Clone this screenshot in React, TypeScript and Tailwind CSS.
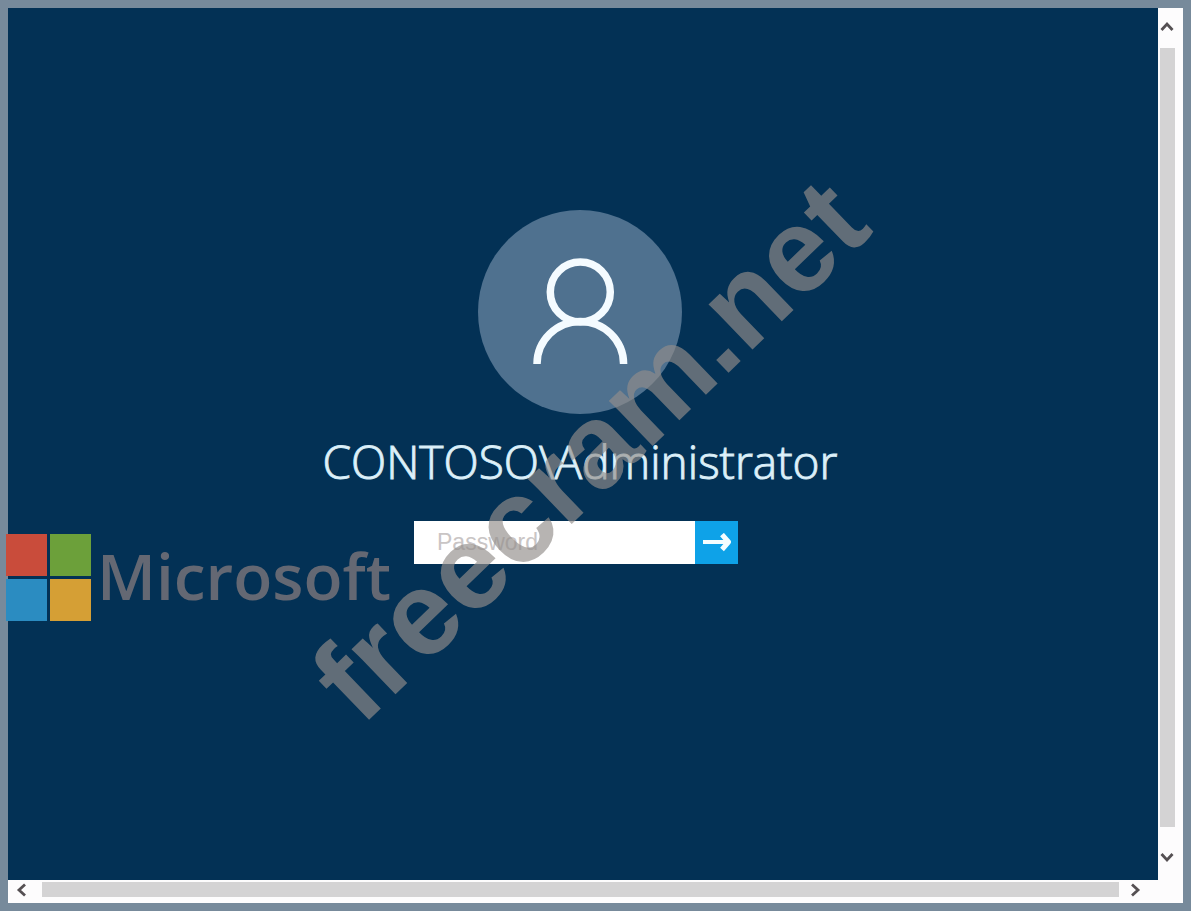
import * as React from "react";
import { useState } from "react";

const chevrons = {
    up: "M1.5 10 L7 4 L12.5 10",
    down: "M1.5 4 L7 10 L12.5 4",
    left: "M10 1.5 L4 7 L10 12.5",
    right: "M4 1.5 L10 7 L4 12.5",
};

function ScrollButton({ direction, className }: { direction: keyof typeof chevrons; className: string }) {
    return (
        <button type="button" aria-label={`Scroll ${direction}`} className={`flex shrink-0 items-center justify-center ${className}`}>
            <svg viewBox="0 0 14 14" className="h-3.5 w-3.5" fill="none" stroke="#555053" strokeWidth="2.8">
                <path d={chevrons[direction]} />
            </svg>
        </button>
    );
}

function Avatar() {
    return (
        <div className="h-[204px] w-[204px] rounded-full bg-[#4f718f]">
            <svg viewBox="0 0 204 204" fill="none" stroke="#f4fbff" strokeWidth="7.5" aria-hidden="true">
                <circle cx="102.3" cy="82" r="30" />
                <path d="M59 154 A43.3 42.5 0 0 1 145.6 154" />
            </svg>
        </div>
    );
}

function LoginForm() {
    const [password, setPassword] = useState("");

    return (
        <form className="mr-2 mt-[29px] flex h-[43px] w-[324px]" onSubmit={(e) => e.preventDefault()}>
            <input
                type="password"
                aria-label="Password"
                placeholder="Password"
                value={password}
                onChange={(e) => setPassword(e.target.value)}
                className="min-w-0 flex-1 bg-white pl-[23px] font-['Liberation_Sans',sans-serif] text-[23px] text-gray-800 outline-none placeholder:text-[#c9c5c5]"
            />
            <button type="submit" aria-label="Submit" className="flex w-[43px] items-center justify-center bg-[#0ea2e8]">
                <svg viewBox="0 0 30 20" className="h-5 w-[30px]" fill="none" stroke="#f4fdff">
                    <path d="M1 9 H27" strokeWidth="4" />
                    <path d="M20 1.5 L26.5 9 L20 16.5" strokeWidth="5" strokeLinejoin="round" />
                </svg>
            </button>
        </form>
    );
}

function MicrosoftLogo() {
    return (
        <div className="pointer-events-none absolute left-1.5 top-[534px] flex items-start gap-1.5">
            <div className="grid grid-cols-2 gap-[3px]">
                <span className="h-[42px] w-[41px] bg-[#c94c3b]" />
                <span className="h-[42px] w-[41px] bg-[#6ca03a]" />
                <span className="h-[42px] w-[41px] bg-[#2b8cc1]" />
                <span className="h-[42px] w-[41px] bg-[#d59f35]" />
            </div>
            <span className="font-['Open_Sans',sans-serif] text-[64px] font-semibold leading-[84px] text-[#646873]">Microsoft</span>
        </div>
    );
}

export default function App() {
    return (
        <div className="relative flex min-h-screen flex-col overflow-hidden bg-[#778a9b] p-2">
            <div className="flex flex-1 flex-col bg-[#fdfcfd]">
                <div className="flex flex-1">
                    <main className="flex flex-1 flex-col items-center bg-[#033155] pr-1.5 pt-[202px]">
                        <Avatar />
                        <h1 className="mt-4 whitespace-nowrap font-['Open_Sans',sans-serif] text-[46px] font-light leading-[62px] text-[#e2f4fc] [-webkit-text-stroke:1px_#d3eaf5]">
                            CONTOSO\Administrator
                        </h1>
                        <LoginForm />
                    </main>
                    <div className="flex w-[25px] flex-col pr-1.5">
                        <ScrollButton direction="up" className="h-10 pb-0.5 pr-0.5" />
                        <div className="mx-0.5 flex-1 bg-[#d4d3d4]" />
                        <ScrollButton direction="down" className="h-[53px] pr-0.5 pt-1.5" />
                    </div>
                </div>
                <div className="flex h-[23px] pb-1.5 pt-0.5">
                    <ScrollButton direction="left" className="w-[34px] pr-1.5" />
                    <div className="flex-1 bg-[#d4d3d4]" />
                    <ScrollButton direction="right" className="w-8" />
                    <div className="w-8" />
                </div>
            </div>

            <MicrosoftLogo />

            <div className="pointer-events-none absolute inset-0 flex items-center justify-center pb-3 pr-3">
                <span className="-rotate-44 whitespace-nowrap font-['Liberation_Sans',sans-serif] text-[119px] font-bold leading-none text-[#928d8a]/66">
                    freecram.net
                </span>
            </div>
        </div>
    );
}
